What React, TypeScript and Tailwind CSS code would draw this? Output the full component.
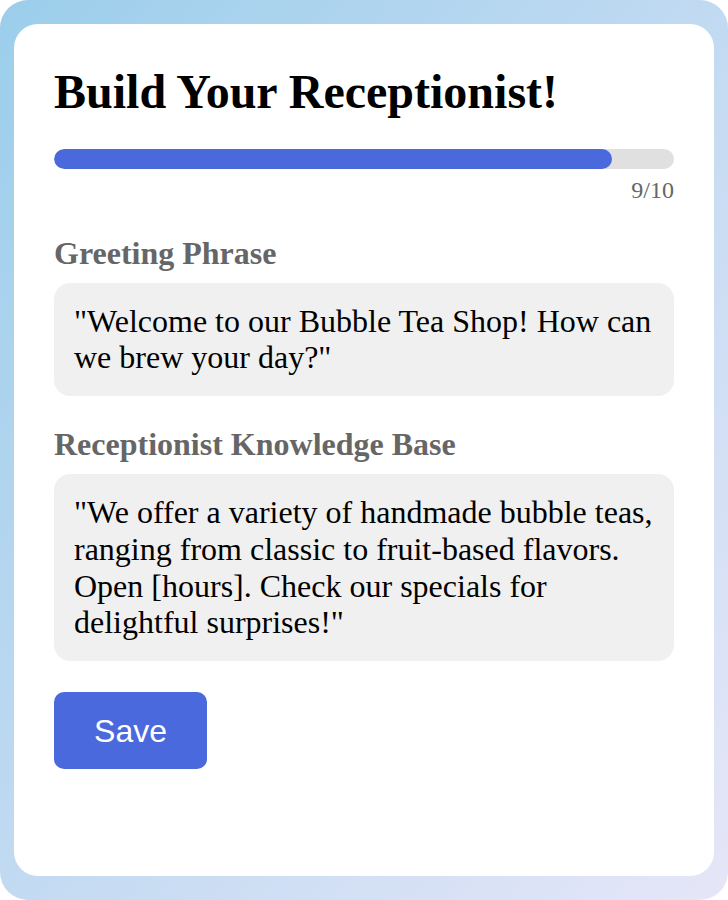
import React from "react";

export default function App() {
  const serif = { fontFamily: '"Liberation Serif", "Times New Roman", serif' };
  return (
    <div className="w-[728px] h-[900px] flex flex-col px-[14px] py-[24px] rounded-[28px] bg-gradient-to-br from-[#9bceeb] to-[#e6e6f8]">
      <div className="flex-1 bg-white rounded-[24px] px-[40px] pt-[40px] flex flex-col" style={serif}>
        <h1 className="text-[48px] font-bold leading-[1.15] text-black">Build Your Receptionist!</h1>
        <div className="mt-[30px] h-[20px] w-full rounded-full bg-[#e0e0e0] overflow-hidden">
          <div className="h-full w-[90%] rounded-full bg-[#4a69dd]" />
        </div>
        <div className="text-right text-[24px] text-[#666] mt-[8px] leading-[1.15]">9/10</div>
        <div className="mt-[30px] text-[32px] font-bold text-[#666] leading-[1.15]">Greeting Phrase</div>
        <div className="mt-[11px] bg-[#f0f0f0] rounded-[16px] p-[20px] text-[32px] leading-[1.15] text-black">
          "Welcome to our Bubble Tea Shop! How can we brew your day?"
        </div>
        <div className="mt-[30px] text-[32px] font-bold text-[#666] leading-[1.15]">Receptionist Knowledge Base</div>
        <div className="mt-[11px] bg-[#f0f0f0] rounded-[16px] p-[20px] text-[32px] leading-[1.15] text-black">
          "We offer a variety of handmade bubble teas, ranging from classic to fruit-based flavors. Open [hours]. Check our specials for delightful surprises!"
        </div>
        <div className="mt-[31px]">
          <button
            className="w-[153px] h-[77px] rounded-[10px] bg-[#4a69dd] text-white text-[32px]"
            style={{ fontFamily: '"Liberation Sans", Arial, sans-serif' }}
          >
            Save
          </button>
        </div>
      </div>
    </div>
  );
}
